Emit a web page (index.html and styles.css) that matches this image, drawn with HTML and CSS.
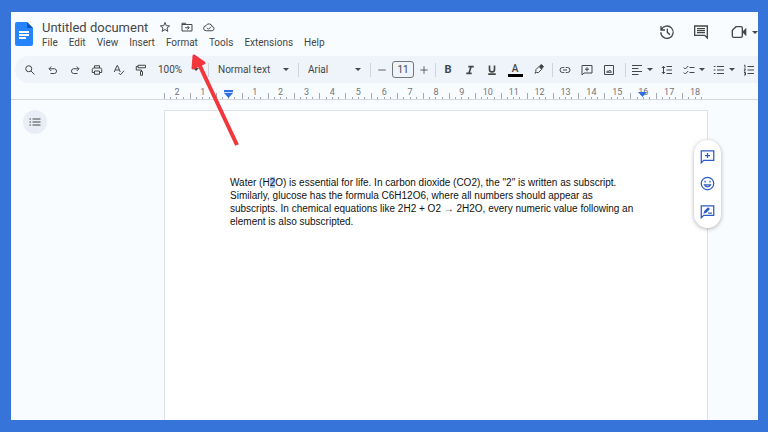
FILE: index.html
```
<!DOCTYPE html>
<html lang="en">
<head>
  <meta charset="UTF-8">
  <meta name="viewport" content="width=device-width, initial-scale=1.0">
  <title>Untitled document</title>
  <link rel="stylesheet" href="styles.css">
</head>
<body>
  <div class="app">
    <header class="header">
      <a href="#" class="logo" aria-label="Docs home">
        <svg viewBox="0 0 18 24">
          <path fill="#2684fc" d="M2 0h10l6 6v16a2 2 0 0 1-2 2H2a2 2 0 0 1-2-2V2a2 2 0 0 1 2-2z"/>
          <path fill="#0b57c4" d="M12 0l6 6h-6z"/>
          <path fill="#fff" d="M4 9h10v2H4zM4 12h10v2H4zM4 15h7v2H4z"/>
        </svg>
      </a>
      <div class="heading">
        <div class="title-row">
          <h1 class="title">Untitled document</h1>
          <button class="title-button" aria-label="Star">
            <svg class="icon" viewBox="0 0 24 24"><path d="M12 3l2.500 6.300 6.700.5-5.200 4.300 1.700 6.600L12 17l-5.700 3.700L8 14.100 2.800 9.800l6.700-.5z"/></svg>
          </button>
          <button class="title-button" aria-label="Move">
            <svg class="icon" viewBox="0 0 24 24"><path d="M2 4.500h7l2 2.500h11v13H2zM2 7h9M8 13.500h8M13 10l3.500 3.500L13 17"/></svg>
          </button>
          <button class="title-button" aria-label="Document status">
            <svg class="icon" viewBox="0 0 24 24"><path d="M6.500 19.500a5 5 0 0 1-.5-10 6.500 6.500 0 0 1 12.300 1.500 4.300 4.300 0 0 1 .2 8.500zM8 13.500l3 3 5-5"/></svg>
          </button>
        </div>
        <nav class="menu">
          <button>File</button>
          <button>Edit</button>
          <button>View</button>
          <button>Insert</button>
          <button>Format</button>
          <button>Tools</button>
          <button>Extensions</button>
          <button>Help</button>
        </nav>
      </div>
      <div class="actions">
        <button class="action" aria-label="Version history">
          <svg class="icon" viewBox="0 0 24 24"><path d="M3.500 8.500a9.300 9.300 0 1 1-.8 4M3 3v6h6M12.500 7v5.500l4 3.500"/></svg>
        </button>
        <button class="action" aria-label="Comments">
          <svg class="icon" viewBox="0 0 24 24"><path d="M2.500 3h19v18l-4-4h-15zM6 7h12M6 10h12M6 13h12"/></svg>
        </button>
        <button class="action action-meet" aria-label="Join a call">
          <svg class="icon" viewBox="0 0 24 24"><path d="M7.500 4H15a2 2 0 0 1 2 2v12a2 2 0 0 1-2 2H4a2 2 0 0 1-2-2V9.500z"/><path class="solid" d="M18 12l4-4v8z"/></svg>
          <span class="caret"></span>
        </button>
      </div>
    </header>

    <div class="toolbar">
      <button class="tool tool-search" aria-label="Search the menus">
        <svg class="icon" viewBox="0 0 24 24"><circle cx="9.500" cy="9.500" r="6"/><path d="M14 14l7 7"/></svg>
      </button>
      <button class="tool" aria-label="Undo">
        <svg class="icon" viewBox="0 0 24 24"><path d="M8.500 5L4 9.500 8.500 14M4.500 9.500H15a4.800 4.800 0 0 1 0 9.500H7"/></svg>
      </button>
      <button class="tool" aria-label="Redo">
        <svg class="icon" viewBox="0 0 24 24"><path d="M15.500 5L20 9.500 15.500 14M19.500 9.500H9A4.800 4.800 0 0 0 9 19h8"/></svg>
      </button>
      <button class="tool" aria-label="Print">
        <svg class="icon" viewBox="0 0 24 24"><path d="M7 8V3.500h10V8M6.500 17H2.500v-6a3 3 0 0 1 3-3h13a3 3 0 0 1 3 3v6h-4M7 14h10v6.500H7z"/></svg>
      </button>
      <button class="tool" aria-label="Spelling and grammar check">
        <svg class="icon" viewBox="0 0 24 24"><path d="M2.500 16L8 3h1l5.500 13M4.500 12h8M11.500 18l3.500 3.500 7-8"/></svg>
      </button>
      <button class="tool" aria-label="Paint format">
        <svg class="icon" viewBox="0 0 24 24"><path d="M6 2.500h15v5H6zM6 5H2.500v7H13v3M11 15h4v7.500h-4z"/></svg>
      </button>
      <label class="picker picker-zoom">
        <select aria-label="Zoom"><option>100%</option></select>
        <span class="caret"></span>
      </label>
      <span class="divider"></span>
      <label class="picker picker-style">
        <select aria-label="Styles"><option>Normal text</option></select>
        <span class="caret"></span>
      </label>
      <span class="divider"></span>
      <label class="picker picker-font">
        <select aria-label="Font"><option>Arial</option></select>
        <span class="caret"></span>
      </label>
      <span class="divider"></span>
      <button class="tool tool-step" aria-label="Decrease font size">
        <svg class="icon" viewBox="0 0 24 24"><path d="M3 12h18"/></svg>
      </button>
      <input class="font-size" type="text" value="11" aria-label="Font size">
      <button class="tool tool-step" aria-label="Increase font size">
        <svg class="icon" viewBox="0 0 24 24"><path d="M3 12h18M12 3v18"/></svg>
      </button>
      <span class="divider"></span>
      <button class="tool letter">B</button>
      <button class="tool" aria-label="Italic">
        <svg class="icon small heavy" viewBox="0 0 24 24"><path d="M8 4h13M3 20h13M14.500 4l-5 16"/></svg>
      </button>
      <button class="tool" aria-label="Underline">
        <svg class="icon small heavy" viewBox="0 0 24 24"><path d="M6 1v9.500a6 6 0 0 0 12 0V1M3 22h18"/></svg>
      </button>
      <button class="tool tool-wide"><span class="color-letter">A</span></button>
      <button class="tool tool-wide" aria-label="Highlight color">
        <svg class="icon" viewBox="0 0 24 24"><path d="M6 11l6-6 5.500 5.500L11 17H7l-3 1.500L5.500 15z"/><path class="solid" d="M13 4l4-3 4 4-4 5z"/></svg>
      </button>
      <span class="divider"></span>
      <button class="tool" aria-label="Insert link">
        <svg class="icon" viewBox="0 0 24 24"><path d="M10.500 7H7a5 5 0 0 0 0 10h3.500M13.500 7H17a5 5 0 0 1 0 10h-3.500M8 12h8"/></svg>
      </button>
      <button class="tool" aria-label="Add comment">
        <svg class="icon" viewBox="0 0 24 24"><path d="M2 3h20v15H6l-4 4zM12 6.500v8M8 10.500h8"/></svg>
      </button>
      <button class="tool" aria-label="Insert image">
        <svg class="icon" viewBox="0 0 24 24"><path d="M3 3h18v18H3zM7 16.500h10l-3.500-4.500-2.500 3-1.500-1.500z"/></svg>
      </button>
      <span class="divider divider-wide"></span>
      <button class="tool tool-menu tool-align" aria-label="Align">
        <svg class="icon" viewBox="0 0 24 24"><path d="M2 3h20M2 9h13M2 15h20M2 21h13"/></svg>
        <span class="caret"></span>
      </button>
      <button class="tool tool-spacing" aria-label="Line spacing">
        <svg class="icon" viewBox="0 0 24 24"><path d="M11 5h11M11 12h11M11 19h11M5 5v14M2 8l3-3.500L8 8M2 16l3 3.500L8 16"/></svg>
      </button>
      <button class="tool tool-menu" aria-label="Checklist">
        <svg class="icon" viewBox="0 0 24 24"><path d="M13 7h10M13 17h10M1.500 7l3 3 6-6M1.500 17l3 3 6-6"/></svg>
        <span class="caret"></span>
      </button>
      <button class="tool tool-menu" aria-label="Bulleted list">
        <svg class="icon" viewBox="0 0 24 24"><path d="M8 5h14M8 12h14M8 19h14M1.500 5h3.500M1.500 12h3.500M1.500 19h3.500"/></svg>
        <span class="caret"></span>
      </button>
      <button class="tool tool-menu" aria-label="Numbered list">
        <svg class="icon" viewBox="0 0 24 24"><path d="M9 5h13M9 12h13M9 19h13M2 2.500h2v5M2 10h3l-3 4h3M2 17h3v5H2M3 19.500h2"/></svg>
      </button>
    </div>

    <div class="ruler">
      <ol class="scale">
        <li>2</li>
        <li>1</li>
        <li><svg class="marker" viewBox="0 0 9 8"><path d="M0 0h9v3L4.500 8 0 3z"/><path stroke="#c9dcff" d="M0 2.500h9"/></svg></li>
        <li>1</li>
        <li>2</li>
        <li>3</li>
        <li>4</li>
        <li>5</li>
        <li>6</li>
        <li>7</li>
        <li>8</li>
        <li>9</li>
        <li>10</li>
        <li>11</li>
        <li>12</li>
        <li>13</li>
        <li>14</li>
        <li>15</li>
        <li>16<svg class="marker" viewBox="0 0 9 8"><path d="M0 2h9L4.500 7z"/></svg></li>
        <li>17</li>
        <li>18</li>
      </ol>
    </div>

    <main class="workspace">
      <div class="outline">
        <button class="outline-button" aria-label="Show outline">
          <svg class="icon" viewBox="0 0 24 24"><path d="M7 6h16M7 12h16M7 18h16M1 6h3M1 12h3M1 18h3"/></svg>
        </button>
      </div>
      <article class="page">
        <p>Water (H<mark>2</mark>O) is essential for life. In carbon dioxide (CO2), the "2" is written as subscript. Similarly, glucose has the formula C6H12O6, where all numbers should appear as subscripts. In chemical equations like 2H2 + O2 → 2H2O, every numeric value following an element is also subscripted.</p>
        <div class="quick-actions">
          <button aria-label="Add comment">
            <svg class="icon" viewBox="0 0 24 24"><path d="M2 3h20v15H6l-4 4zM12 6.500v8M8 10.500h8"/></svg>
          </button>
          <button aria-label="Add emoji reaction">
            <svg class="icon" viewBox="0 0 24 24"><circle cx="12" cy="12" r="10"/><path d="M8 7.500v3M16 7.500v3M7 14a5.500 5.500 0 0 0 10 0z"/></svg>
          </button>
          <button aria-label="Suggest edits">
            <svg class="icon" viewBox="0 0 24 24"><path d="M2 3h20v15H6l-4 4zM13 14.500h6"/><path class="solid" d="M7 14l1-2.500 5-5 1.500 1.500-5 5z"/></svg>
          </button>
        </div>
      </article>
    </main>

    <!-- points at the Format menu -->
    <svg class="pointer" viewBox="0 0 50 96">
      <path class="shaft" d="M9 11l38 81"/>
      <path class="head" d="M4 3l10 7-11 5z"/>
    </svg>
  </div>
</body>
</html>
```
FILE: styles.css
```
* {
  box-sizing: border-box;
}
body {
  margin: 0;
  min-height: 100vh;
  padding: 12px 10px 12px 11px;
  display: flex;
  background-color: #3674d9;
  color: #444746;
  font-family: Roboto, "Liberation Sans", sans-serif;
  font-size: 10px;
}
button,
select,
input {
  margin: 0;
  padding: 0;
  border: none;
  background: none;
  color: inherit;
  font: inherit;
}
button {
  display: flex;
  align-items: center;
  justify-content: center;
}
.app {
  position: relative;
  flex: 1;
  min-width: 0;
  display: flex;
  flex-direction: column;
  overflow: hidden;
  background-color: #f9fcff;
}
.icon {
  width: 12px;
  height: 12px;
  flex: none;
  fill: none;
  stroke: currentColor;
  stroke-width: 2;
}
.icon .solid {
  fill: currentColor;
}
.icon.small {
  width: 10px;
  height: 10px;
}
.icon.heavy {
  stroke-width: 4;
}
.caret {
  flex: none;
  border: 3px solid transparent;
  border-top-color: currentColor;
  border-bottom: none;
}

/* header */
.header {
  display: flex;
  height: 44px;
  padding: 7px 0 0 4px;
}
.logo {
  width: 18px;
  height: 24px;
  margin-top: 3px;
}
.logo svg {
  display: block;
}
.heading {
  padding-left: 9px;
}
.title-row {
  display: flex;
  align-items: center;
  gap: 10px;
  height: 16px;
}
.title {
  margin: 0 1px 0 0;
  font-size: 13px;
  font-weight: 400;
}
.menu {
  display: flex;
  gap: 11px;
  height: 15px;
}
.actions {
  display: flex;
  align-items: center;
  height: 26px;
  gap: 18px;
  margin-left: auto;
}
.action .icon {
  width: 16px;
  height: 16px;
}
.action-meet {
  gap: 5px;
  margin-left: 4px;
}

/* toolbar */
.toolbar {
  display: flex;
  align-items: center;
  height: 27px;
  margin-left: 4px;
  padding-left: 4px;
  overflow: hidden;
  border-radius: 14px 0 0 14px;
  background-color: #eff3fa;
}
.tool {
  flex: none;
  width: 22px;
  height: 22px;
}
.tool-search {
  margin-right: 1px;
}
.tool-step {
  width: 20px;
}
.tool-step .icon {
  width: 10px;
  height: 10px;
}
.tool-wide {
  width: 24px;
}
.tool-menu {
  justify-content: flex-start;
  gap: 4px;
  width: 30px;
}
.tool-align {
  width: 25px;
}
.tool-spacing {
  margin-right: 5px;
}
.divider {
  flex: none;
  width: 1px;
  height: 14px;
  margin: 0 1px;
  background-color: #cfd3da;
}
.divider-wide {
  margin: 0 5px;
}
.picker {
  flex: none;
  display: flex;
  align-items: center;
  justify-content: space-between;
  padding: 0 8px;
}
.picker select {
  appearance: none;
}
.picker-zoom {
  width: 55px;
  padding: 0 8px 0 6px;
}
.picker-style {
  width: 87px;
}
.picker-font {
  width: 69px;
}
.font-size {
  flex: none;
  width: 22px;
  height: 17px;
  border: 1px solid #747775;
  border-radius: 3px;
  text-align: center;
}
.letter {
  font-size: 11px;
  font-weight: 700;
}
.color-letter {
  width: 15px;
  border-bottom: 3px solid #000;
  font-weight: 500;
  line-height: 11px;
}

/* ruler and page share the same columns */
.ruler,
.workspace {
  display: grid;
  grid-template-columns: 153px minmax(0, 544px) 1fr;
}
.ruler {
  height: 17px;
  border-bottom: 1px solid #d5d8dc;
}
.scale {
  grid-column: 2;
  display: grid;
  grid-template-columns: repeat(21, 1fr);
  margin: 0;
  padding: 4px 0 0;
  list-style: none;
  font-size: 9px;
  line-height: 10px;
  text-align: center;
  color: #70757a;
}
.scale li {
  position: relative;
  background:
    linear-gradient(#a5a9ad, #a5a9ad) 0 100% / 1px 6px,
    linear-gradient(#a5a9ad, #a5a9ad) 25% 100% / 1px 2px,
    linear-gradient(#a5a9ad, #a5a9ad) 50% 100% / 1px 2px,
    linear-gradient(#a5a9ad, #a5a9ad) 75% 100% / 1px 2px;
  background-repeat: no-repeat;
}
.marker {
  position: absolute;
  left: 8px;
  top: 3px;
  width: 9px;
  height: 8px;
  fill: #2f6fe4;
}
.workspace {
  flex: 1;
  padding-top: 10px;
}
.outline-button {
  width: 24px;
  height: 24px;
  margin-left: 12px;
  border-radius: 50%;
  background-color: #e9eef6;
}
.page {
  position: relative;
  padding: 65px;
  border: 1px solid #dfe3e8;
  border-bottom: none;
  background-color: #fff;
  color: #111;
  font-family: "Liberation Sans", Arial, sans-serif;
}
.page p {
  margin: 0;
  line-height: 13px;
}
.page mark {
  background-color: #a9cbf8;
  color: inherit;
}
.quick-actions {
  position: absolute;
  top: 29px;
  right: -14px;
  display: flex;
  flex-direction: column;
  justify-content: space-around;
  width: 27px;
  height: 88px;
  padding: 3px 0;
  border-radius: 14px;
  background-color: #fff;
  box-shadow: 0 1px 4px rgba(60, 64, 67, 0.4);
  color: #2c5cc0;
}
.quick-actions .icon {
  width: 15px;
  height: 15px;
}
.pointer {
  position: absolute;
  left: 179px;
  top: 41px;
  width: 50px;
  height: 96px;
  pointer-events: none;
}
.pointer .shaft {
  fill: none;
  stroke: #f1363c;
  stroke-width: 4;
}
.pointer .head {
  fill: #f1363c;
  stroke: #f1363c;
  stroke-width: 3;
  stroke-linejoin: round;
}
```
